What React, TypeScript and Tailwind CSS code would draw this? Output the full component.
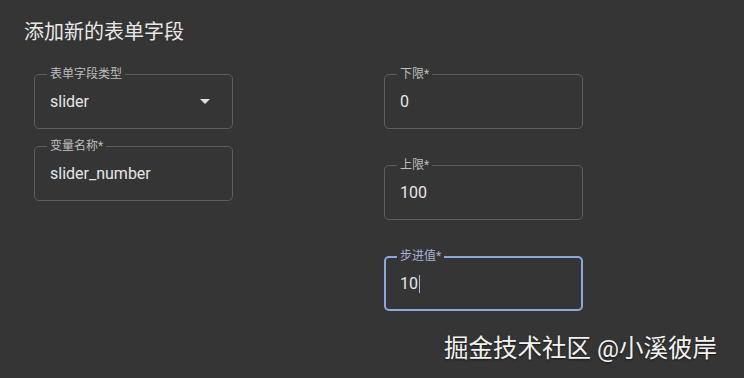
import React from "react";

function Field({
  label,
  value,
  focused = false,
  select = false,
  caret = false,
}: {
  label: string;
  value: string;
  focused?: boolean;
  select?: boolean;
  caret?: boolean;
}) {
  return (
    <div
      className={
        "relative h-[55px] w-[199px] rounded-[5px] " +
        (focused ? "border-2 border-[#8ea6dd]" : "border border-[#5e5e5e]")
      }
    >
      <span
        className={
          "absolute left-[12px] top-[-9px] bg-[#353535] px-[3px] text-[12px] leading-[16px] " +
          (focused ? "ml-[-1px] mt-[-1px] text-[#a8b3cf]" : "text-[#bdbdbd]")
        }
      >
        {label}
      </span>
      <div
        className={
          "flex h-full items-center text-[16px] text-[#e6e6e6] " +
          (focused ? "pl-[14px] pr-[13px]" : "pl-[15px] pr-[14px]")
        }
      >
        <span>{value}</span>
        {caret && <span className="ml-[1px] inline-block h-[18px] w-[1px] bg-[#9fb6ea]" />}
        {select && (
          <svg className="ml-auto mr-[8px]" width="10" height="5" viewBox="0 0 10 5">
            <path d="M0 0 L10 0 L5 5 Z" fill="#e0e0e0" />
          </svg>
        )}
      </div>
    </div>
  );
}

export default function App() {
  return (
    <div
      className="relative h-[378px] w-[744px] overflow-hidden bg-[#353535]"
      style={{ fontFamily: "Roboto, 'Noto Sans CJK SC', sans-serif" }}
    >
      <div className="pl-[24px] pt-[18px] text-[20px] leading-[28px] text-[#e8e8e8]">添加新的表单字段</div>
      <div className="mt-[28px] flex">
        <div className="ml-[34px] flex flex-col gap-[17px]">
          <Field label="表单字段类型" value="slider" select />
          <Field label="变量名称*" value="slider_number" />
        </div>
        <div className="ml-[151px] flex flex-col gap-[36px]">
          <Field label="下限*" value="0" />
          <Field label="上限*" value="100" />
          <Field label="步进值*" value="10" focused caret />
        </div>
      </div>
      <div
        className="absolute left-[444px] top-[333px] text-[24.5px] leading-[32px] text-[#f2f2f2]"
        style={{ textShadow: "0 1px 2px rgba(0,0,0,0.6)" }}
      >
        掘金技术社区 @小溪彼岸
      </div>
    </div>
  );
}
